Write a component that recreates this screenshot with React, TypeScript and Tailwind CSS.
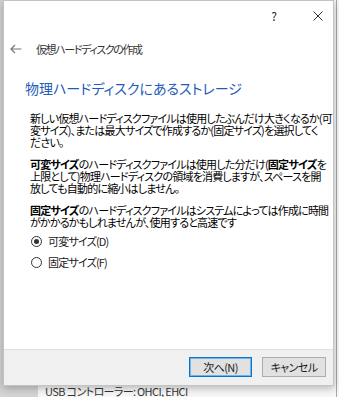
import type { ReactNode } from "react";

const P1 = [
  "新しい仮想ハードディスクファイルは使用したぶんだけ大きくなるか(可",
  "変サイズ)、または最大サイズで作成するか(固定サイズ)を選択してく",
  "ださい。",
];

function Line({ children }: { children: ReactNode }) {
  return <div className="whitespace-nowrap">{children}</div>;
}

function Radio({ label, checked }: { label: string; checked?: boolean }) {
  return (
    <div className="flex h-[16px] items-center gap-[6px]">
      <span className="flex h-[11px] w-[11px] items-center justify-center rounded-full border border-[#333]">
        {checked ? <span className="h-[5px] w-[5px] rounded-full bg-[#333]" /> : null}
      </span>
      <span className="text-[11px] leading-[16px] tracking-[-0.8px] text-[#1a1a1a]">{label}</span>
    </div>
  );
}

export default function App() {
  return (
    <div className="relative h-[397px] w-[339px] overflow-hidden bg-[#f7f7f7] font-['Noto_Sans_CJK_JP','Noto_Sans',sans-serif] [font-feature-settings:'palt']">
      {/* window behind the dialog */}
      <div className="flex h-full">
        <div className="w-[38px] shrink-0 bg-[#d4d4d4]" />
        <div className="grid flex-1 grid-cols-[92px_1fr] content-start whitespace-nowrap pl-[7px] pt-[385px] text-[11px] leading-[12px] tracking-[-0.6px] text-[#333]">
          <span>USB コントローラー:</span>
          <span>OHCI, EHCI</span>
          <span>デバイスフィルター:</span>
          <span>0 (0 アクティブ)</span>
        </div>
        <div className="w-[3px] shrink-0 border-l border-[#a8a8a8]" />
      </div>

      {/* dialog */}
      <div className="absolute left-[3px] top-0 flex h-[386px] w-[331px] flex-col border border-[#c4c4c4] bg-white shadow-[0_2px_8px_rgba(0,0,0,0.28)]">
        <div className="flex h-[29px] items-center justify-end gap-[30px] pr-[8px] text-[#222]">
          <span className="w-[14px] text-center text-[12px] leading-none">?</span>
          <span className="flex w-[14px] justify-center">
            <svg width="10" height="10" viewBox="0 0 10 10">
              <path d="M0.5 0.5 L9.5 9.5 M9.5 0.5 L0.5 9.5" stroke="#333" strokeWidth="1" />
            </svg>
          </span>
        </div>

        <div className="mt-[9px] flex h-[20px] items-center gap-[14px] pl-[6px]">
          <svg width="12" height="10" viewBox="0 0 12 10">
            <path d="M11.5 5 H1 M5 1 L1 5 L5 9" stroke="#777" strokeWidth="1.2" fill="none" />
          </svg>
          <span className="text-[11px] tracking-[-1.4px] text-[#333]">仮想ハードディスクの作成</span>
        </div>

        <div className="mt-[21px] pl-[21px] text-[14px] leading-[16px] text-[#1f5cb8]">
          物理ハードディスクにあるストレージ
        </div>

        <div className="mt-[16px] flex flex-col gap-[10px] pl-[26px] text-[11px] leading-[12px] tracking-[-0.8px] text-black">
          <div>
            {P1.map((l) => (
              <Line key={l}>{l}</Line>
            ))}
          </div>
          <div>
            <Line>
              <b>可変サイズ</b>のハードディスクファイルは使用した分だけ(<b>固定サイズ</b>を
            </Line>
            <Line>上限として)物理ハードディスクの領域を消費しますが、スペースを開</Line>
            <Line>放しても自動的に縮小はしません。</Line>
          </div>
          <div>
            <Line>
              <b>固定サイズ</b>のハードディスクファイルはシステムによっては作成に時間
            </Line>
            <Line>がかかるかもしれませんが、使用すると高速です</Line>
          </div>
        </div>

        <div className="mt-[5px] flex flex-col gap-[5px] pl-[27px]">
          <Radio label="可変サイズ(D)" checked />
          <Radio label="固定サイズ(F)" />
        </div>

        <div className="mt-auto flex h-[36px] items-start justify-end gap-[10px] border-t border-[#dfdfdf] bg-[#f0f0f0] pr-[7px] pt-[7px]">
          <button className="h-[20px] w-[63px] border border-[#0078d7] bg-[#e1e1e1] text-[11px] leading-none tracking-[-0.6px] text-[#1a1a1a] shadow-[inset_0_0_0_1px_rgba(0,120,215,0.45)]">
            次へ(N)
          </button>
          <button className="h-[20px] w-[64px] border border-[#adadad] bg-[#e1e1e1] text-[11px] leading-none tracking-[-0.6px] text-[#1a1a1a]">
            キャンセル
          </button>
        </div>
      </div>
    </div>
  );
}
